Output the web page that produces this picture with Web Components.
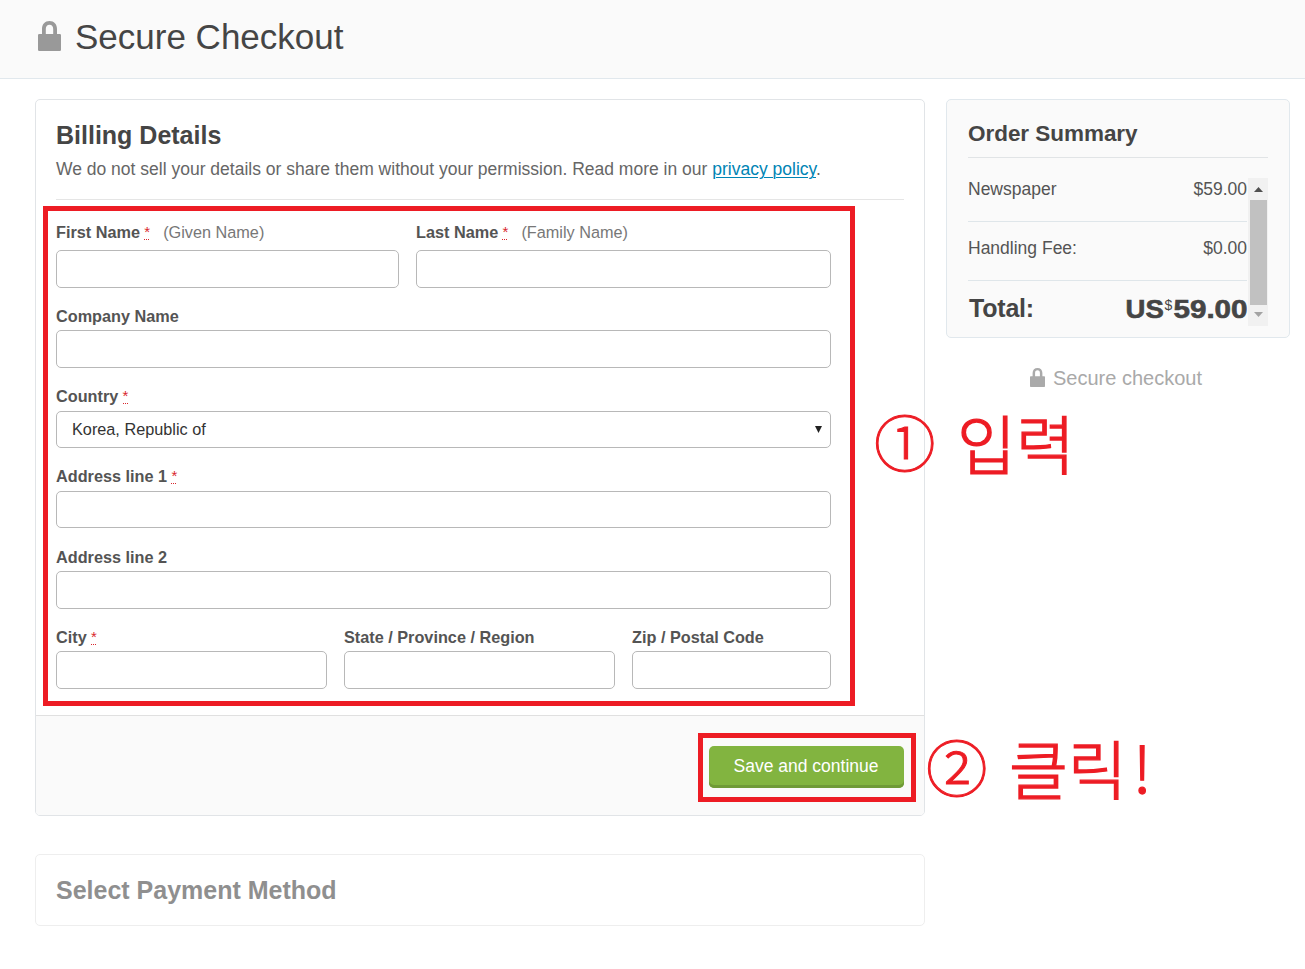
<!DOCTYPE html>
<html lang="en">
<head>
<meta charset="utf-8">
<title>Secure Checkout</title>
<style>
body { margin: 0; background: #fff; font-family: "Liberation Sans", Arial, sans-serif; color: #454545; }
</style>
</head>
<body>
<checkout-page></checkout-page>
<script>
function define(name, html, setup) {
  const template = document.createElement('template');
  template.innerHTML = html;
  customElements.define(name, class extends HTMLElement {
    constructor() {
      super();
      this.attachShadow({ mode: 'open' }).append(template.content.cloneNode(true));
    }
    connectedCallback() { if (setup) setup(this, this.shadowRoot); }
  });
}

define('lock-icon', `
<style>
:host { display: block; flex: none; width: 23px; height: 30px; color: #999; }
svg { display: block; width: 100%; height: 100%; }
</style>
<svg viewBox="0 0 23 30" preserveAspectRatio="none"><path fill="currentColor" fill-rule="evenodd" d="M0 14.2Q0 13 1.2 13H4V8C4 3 7 0 11.5 0S19 3 19 8V13H21.8Q23 13 23 14.2V28.8Q23 30 21.8 30H1.2Q0 30 0 28.8ZM7.8 13H15.2V8C15.2 5.3 14 3.7 11.5 3.7S7.8 5.3 7.8 8Z"/></svg>`);

define('page-header', `
<style>
:host { display: flex; align-items: center; box-sizing: border-box; height: 79px; padding: 0 0 4px 38px; background: #fafafa; border-bottom: 1px solid #e1e8ed; }
lock-icon { margin: -2px 14px 0 0; }
h1 { margin: 0; font-size: 35px; line-height: 74px; font-weight: 400; }
</style>
<lock-icon></lock-icon><h1><slot></slot></h1>`);

define('form-field', `
<style>
:host { display: block; min-width: 0; }
.label { display: flex; height: 20px; line-height: 20px; margin-top: -.65px; margin-bottom: calc(var(--label-gap, 3.85px) + .65px); font-size: 16.25px; font-weight: 700; color: #545454; white-space: nowrap; }
.star { display: none; position: relative; width: 6.3px; font-size: 15px; font-weight: 400; color: #d9272d; margin-left: 4.3px; }
.star::after { content: ""; position: absolute; left: 0; top: 17px; width: 5px; height: 1px; background: repeating-linear-gradient(90deg, #d9272d 0 1px, transparent 1px 2px); }
:host([required]) .star { display: block; }
.hint { font-weight: 400; color: #777; margin-left: 12.6px; }
.control { display: flex; align-items: center; justify-content: space-between; box-sizing: border-box; height: 37.5px; border: 1px solid #b8b8b8; border-radius: 5px; background: #fff; padding: 0 8px 0 15px; font-size: 16.25px; color: #333; }
svg { display: none; width: 7px; height: 7px; }
:host([select]) svg { display: block; }
</style>
<div class="label"><span class="text"></span><span class="star">*</span><span class="hint"></span></div>
<div class="control"><slot></slot><svg viewBox="0 0 7 7"><path fill="#222" d="M0 0H7L3.5 7Z"/></svg></div>`,
(host, root) => {
  root.querySelector('.text').textContent = host.getAttribute('label');
  root.querySelector('.hint').textContent = host.getAttribute('hint') || '';
});

define('action-button', `
<style>
:host { display: block; box-sizing: border-box; width: 195px; height: 42px; border-radius: 5px; background: #82b440; box-shadow: inset 0 -3px 0 #6f9a37; color: #fff; font-size: 17.5px; line-height: 40px; text-align: center; text-indent: -1px; }
</style><slot></slot>`);

define('billing-card', `
<style>
:host { display: flex; flex-direction: column; box-sizing: border-box; height: 717px; border: 1px solid #e1e4e7; border-radius: 5px; overflow: hidden; }
.body { flex: 1; padding: 20px 20px 0; }
h2 { margin: 0; font-size: 25px; line-height: 31px; }
p { margin: 6px 0 17px; font-size: 17.5px; line-height: 25px; color: #666; white-space: nowrap; }
a { color: #0084b4; text-decoration: underline; text-decoration-thickness: 1px; text-underline-offset: 2px; }
hr { margin: 0; border: 0; height: 1px; background: #e5e5e5; }
form { display: flex; flex-direction: column; gap: 18.85px; width: 775px; padding-top: 22.4px; }
.names { display: grid; grid-template-columns: 343px 415px; column-gap: 17px; --label-gap: 7.85px; }
.place { display: grid; grid-template-columns: 271px 271px 199px; column-gap: 17px; }
footer { display: flex; justify-content: flex-end; box-sizing: border-box; height: 100px; padding: 30px 20px 0; border-top: 1px solid #e0e0e0; background: #fafafa; }
</style>
<div class="body">
  <h2>Billing Details</h2>
  <p>We do not sell your details or share them without your permission. Read more in our <a>privacy policy</a>.</p>
  <hr>
  <form>
    <div class="names"><form-field label="First Name" required hint="(Given Name)"></form-field><form-field label="Last Name" required hint="(Family Name)"></form-field></div>
    <form-field label="Company Name"></form-field>
    <form-field label="Country" required select>Korea, Republic of</form-field>
    <form-field label="Address line 1" required></form-field>
    <form-field label="Address line 2"></form-field>
    <div class="place"><form-field label="City" required></form-field><form-field label="State / Province / Region"></form-field><form-field label="Zip / Postal Code"></form-field></div>
  </form>
</div>
<footer><action-button>Save and continue</action-button></footer>`);

define('payment-card', `
<style>
:host { display: block; box-sizing: border-box; height: 72px; padding: 0 20px; border: 1px solid #eee; border-radius: 5px; }
h2 { margin: 0; font-size: 25px; line-height: 70px; color: #8f8f8f; }
</style><h2><slot></slot></h2>`);

define('scroll-bar', `
<style>
:host { display: flex; flex-direction: column; align-items: center; box-sizing: border-box; width: 20px; height: 148px; padding: 9px 1px 9px 2px; background: #f1f1f1; }
svg { display: block; width: 9px; height: 5px; margin-left: -1px; }
.thumb { width: 17px; height: 105px; margin: 8px 0 7px; background: #c1c1c1; }
</style>
<svg viewBox="0 0 9 5"><path fill="#505050" d="M0 5L4.5 0L9 5Z"/></svg><div class="thumb"></div><svg viewBox="0 0 9 5"><path fill="#a3a3a3" d="M0 0H9L4.5 5Z"/></svg>`);

define('summary-row', `
<style>
:host { display: flex; justify-content: space-between; box-sizing: border-box; height: 59px; padding-bottom: 15px; border-bottom: 1px solid #dfe6ea; font-size: 17.5px; line-height: 22px; color: #545454; }
</style><slot name="name"></slot><slot></slot>`);

define('order-summary', `
<style>
:host { display: block; box-sizing: border-box; height: 239px; padding: 17px 21px 0; border: 1px solid #e1e8ed; border-radius: 5px; background: #fafafa; }
h3 { margin: 0; height: 40px; border-bottom: 1px solid #e1e4e6; font-size: 22.5px; line-height: 33px; letter-spacing: -.04px; }
.scroll { display: flex; justify-content: space-between; margin-top: 20px; }
.rows { width: 279px; }
summary-row:first-child { height: 44px; }
summary-row + summary-row { padding-top: 15px; }
.total { display: flex; justify-content: space-between; padding: 11px 0 0 1px; font-size: 25px; line-height: 32px; font-weight: 700; }
.total > span:first-child { letter-spacing: -.2px; }
.amount { display: flex; }
.us, .num { -webkit-text-stroke: .6px #454545; }
.us { transform: scaleX(1.1); transform-origin: right; width: 34px; margin-right: 2px; }
.num { transform: scaleX(1.185); transform-origin: right; width: 62.5px; margin: 1px 0 0 12px; }
.us { margin-top: 1px; }
sup { font-size: 14px; line-height: 26px; font-weight: 400; width: 8px; }
</style>
<h3>Order Summary</h3>
<div class="scroll">
  <div class="rows">
    <summary-row><span slot="name">Newspaper</span><span>$59.00</span></summary-row>
    <summary-row><span slot="name">Handling Fee:</span><span>$0.00</span></summary-row>
    <div class="total"><span>Total:</span><span class="amount"><span class="us">US</span><sup>$</sup><span class="num">59.00</span></span></div>
  </div>
  <scroll-bar></scroll-bar>
</div>`);

define('secure-note', `
<style>
:host { display: flex; align-items: center; gap: 8px; margin: 28px 0 0 84px; height: 24px; font-size: 20px; line-height: 24px; color: #a9a9a9; }
lock-icon { width: 15px; height: 19px; margin-top: -2px; color: #aaa; }
</style><lock-icon></lock-icon><span><slot></slot></span>`);

define('red-frame', `
<style>:host { display: block; position: absolute; box-sizing: border-box; border: 5px solid #ed1c24; pointer-events: none; }</style>`);

define('step-note', `
<style>
:host { display: flex; position: absolute; white-space: pre; color: #ed1c24; font: 300 64px/80px "Noto Sans CJK KR", sans-serif; -webkit-text-stroke: 1.3px #ed1c24; }
.num { width: 83px; font-size: 61.5px; -webkit-text-stroke-width: 1px; }
.mark { margin-left: 6px; }
</style><span class="num"><slot name="num"></slot></span><span><slot></slot></span><span class="mark"><slot name="mark"></slot></span>`);

define('checkout-page', `
<style>
:host { display: block; position: relative; width: 1305px; height: 969px; overflow: hidden; }
main { display: grid; grid-template-columns: 890px 344px; column-gap: 21px; padding: 20px 15px 0 35px; }
.steps { display: flex; flex-direction: column; gap: 38px; }
.f1 { left: 43px; top: 206px; width: 812px; height: 500px; }
.f2 { left: 698px; top: 733px; width: 218px; height: 69px; }
.n1 { left: 874px; top: 401px; }
.n2 { left: 926px; top: 726px; }
</style>
<page-header>Secure Checkout</page-header>
<main>
  <div class="steps"><billing-card></billing-card><payment-card>Select Payment Method</payment-card></div>
  <aside><order-summary></order-summary><secure-note>Secure checkout</secure-note></aside>
</main>
<red-frame class="f1"></red-frame>
<red-frame class="f2"></red-frame>
<step-note class="n1" lang="ko"><span slot="num">①</span>입력</step-note>
<step-note class="n2" lang="ko"><span slot="num">②</span>클릭<span slot="mark">!</span></step-note>`);
</script>
</body>
</html>
